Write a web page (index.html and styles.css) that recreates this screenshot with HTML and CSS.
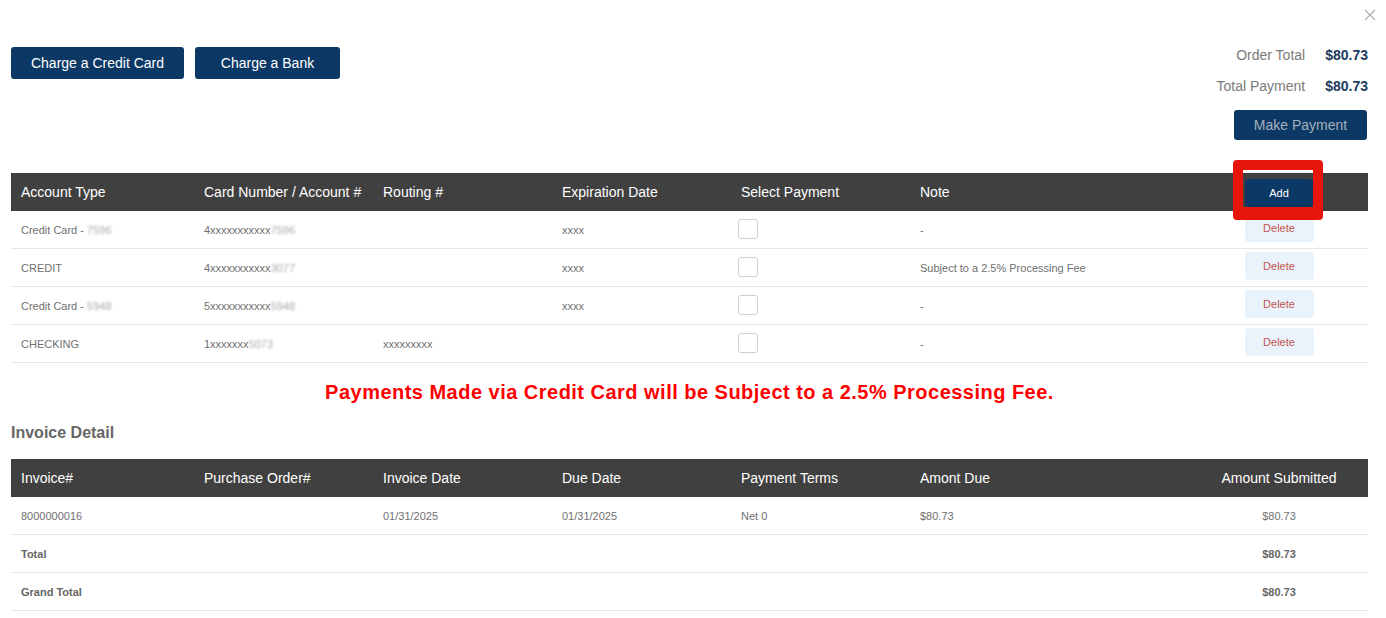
FILE: index.html
```html
<!DOCTYPE html>
<html>
<head>
<meta charset="utf-8">
<link rel="stylesheet" href="styles.css">
</head>
<body>
<div class="page">
  <button class="close" aria-label="Close">
    <svg width="12" height="12" viewBox="0 0 12 12"><path d="M1 1L11 11M11 1L1 11" stroke="#b0b0b0" stroke-width="1.2" fill="none"/></svg>
  </button>
  <div class="top">
    <div class="charge-buttons">
      <button class="btn btn-navy btn-cc">Charge a Credit Card</button>
      <button class="btn btn-navy btn-bank">Charge a Bank</button>
    </div>
    <div class="summary">
      <div class="totals">
        <span class="label">Order Total</span><span class="value">$80.73</span>
        <span class="label">Total Payment</span><span class="value">$80.73</span>
      </div>
      <button class="btn btn-navy btn-make">Make Payment</button>
    </div>
  </div>

  <table class="grid accounts">
    <colgroup>
      <col class="c1"><col class="c2"><col class="c3"><col class="c4"><col class="c5"><col class="c6"><col class="c7">
    </colgroup>
    <thead>
      <tr>
        <th>Account Type</th>
        <th>Card Number / Account #</th>
        <th>Routing #</th>
        <th>Expiration Date</th>
        <th>Select Payment</th>
        <th>Note</th>
        <th class="center"><div class="add-wrap"><button class="btn-add">Add</button><span class="highlight"></span></div></th>
      </tr>
    </thead>
    <tbody>
      <tr>
        <td>Credit Card - <span class="blur">7596</span></td>
        <td>4xxxxxxxxxxx<span class="blur">7596</span></td>
        <td></td>
        <td>xxxx</td>
        <td><span class="check"></span></td>
        <td>-</td>
        <td class="center"><button class="btn-del">Delete</button></td>
      </tr>
      <tr>
        <td>CREDIT</td>
        <td>4xxxxxxxxxxx<span class="blur">3077</span></td>
        <td></td>
        <td>xxxx</td>
        <td><span class="check"></span></td>
        <td>Subject to a 2.5% Processing Fee</td>
        <td class="center"><button class="btn-del">Delete</button></td>
      </tr>
      <tr>
        <td>Credit Card - <span class="blur">5948</span></td>
        <td>5xxxxxxxxxxx<span class="blur">5948</span></td>
        <td></td>
        <td>xxxx</td>
        <td><span class="check"></span></td>
        <td>-</td>
        <td class="center"><button class="btn-del">Delete</button></td>
      </tr>
      <tr>
        <td>CHECKING</td>
        <td>1xxxxxxx<span class="blur">5073</span></td>
        <td>xxxxxxxxx</td>
        <td></td>
        <td><span class="check"></span></td>
        <td>-</td>
        <td class="center"><button class="btn-del">Delete</button></td>
      </tr>
    </tbody>
  </table>

  <p class="notice">Payments Made via Credit Card will be Subject to a 2.5% Processing Fee.</p>

  <h3 class="section-title">Invoice Detail</h3>

  <table class="grid invoices">
    <colgroup>
      <col class="c1"><col class="c2"><col class="c3"><col class="c4"><col class="c5"><col class="c6"><col class="c7">
    </colgroup>
    <thead>
      <tr>
        <th>Invoice#</th>
        <th>Purchase Order#</th>
        <th>Invoice Date</th>
        <th>Due Date</th>
        <th>Payment Terms</th>
        <th>Amont Due</th>
        <th class="center">Amount Submitted</th>
      </tr>
    </thead>
    <tbody>
      <tr>
        <td>8000000016</td>
        <td></td>
        <td>01/31/2025</td>
        <td>01/31/2025</td>
        <td>Net 0</td>
        <td>$80.73</td>
        <td class="center">$80.73</td>
      </tr>
      <tr class="bold">
        <td>Total</td>
        <td></td><td></td><td></td><td></td><td></td>
        <td class="center">$80.73</td>
      </tr>
      <tr class="bold">
        <td>Grand Total</td>
        <td></td><td></td><td></td><td></td><td></td>
        <td class="center">$80.73</td>
      </tr>
    </tbody>
  </table>
</div>
</body>
</html>
```

FILE: styles.css
```css
* { box-sizing: border-box; }

body {
  margin: 0;
  background: #fff;
  font-family: "Liberation Sans", Arial, sans-serif;
  color: #666;
}

.page {
  position: relative;
  width: 1386px;
  padding: 0 18px 0 11px;
}

.close {
  position: absolute;
  top: 9px;
  right: 10px;
  width: 12px;
  height: 12px;
  padding: 0;
  border: 0;
  background: none;
  display: block;
}
.close svg { display: block; }

.top {
  display: flex;
  justify-content: space-between;
  align-items: flex-start;
}

.charge-buttons {
  display: flex;
  gap: 11px;
  margin-top: 47px;
}

.btn {
  font-family: "Liberation Sans", Arial, sans-serif;
  border: 0;
  border-radius: 3px;
  cursor: pointer;
}

.btn-navy {
  background: #0b3864;
  color: #fff;
  font-size: 14px;
  height: 32px;
}

.btn-cc { width: 173px; }
.btn-bank { width: 145px; }

.summary {
  display: flex;
  flex-direction: column;
  align-items: flex-end;
  padding-top: 45px;
}

.totals {
  display: grid;
  grid-template-columns: auto auto;
  column-gap: 20px;
  row-gap: 11px;
  font-size: 14px;
  line-height: 20px;
}

.totals .label {
  text-align: right;
  color: #7a7a7a;
}

.totals .value {
  font-weight: bold;
  color: #1c3b5f;
}

.btn-make {
  margin-top: 14px;
  width: 133px;
  height: 30px;
  font-size: 14px;
  color: #a4b0be;
  margin-right: 1px;
}

.grid {
  width: 1357px;
  border-collapse: separate;
  border-spacing: 0;
  table-layout: fixed;
}

.grid .c1 { width: 183px; }
.grid .c2, .grid .c3, .grid .c4, .grid .c5 { width: 179px; }
.grid .c6 { width: 280px; }
.grid .c7 { width: 178px; }

.grid th {
  background: #404040;
  color: #fff;
  font-weight: normal;
  font-size: 14px;
  text-align: left;
  height: 38px;
  padding: 0 10px;
  vertical-align: middle;
}

.grid td {
  height: 38px;
  padding: 0 10px;
  font-size: 11px;
  color: #707070;
  border-bottom: 1px solid #e6e6e6;
  vertical-align: middle;
  white-space: nowrap;
}

.grid .center { text-align: center; }

.accounts { margin-top: 33px; }

.blur {
  color: #aaa;
  filter: blur(1.3px);
}

.check {
  display: block;
  width: 20px;
  height: 20px;
  margin-left: -3px;
  margin-top: -2px;
  border: 1px solid #d0d0d0;
  border-radius: 3px;
  background: #fff;
}

.add-wrap {
  position: relative;
  width: 68px;
  height: 28px;
  margin: 2px auto 0;
}

.btn-add {
  display: block;
  width: 68px;
  height: 28px;
  border: 0;
  border-radius: 2px;
  background: #0b3864;
  color: #fff;
  font-family: "Liberation Sans", Arial, sans-serif;
  font-size: 11px;
}

.highlight {
  position: absolute;
  left: -12px;
  top: -19px;
  width: 90px;
  height: 60px;
  border: 10px solid #e8150d;
  border-bottom-width: 13px;
  border-radius: 4px;
  pointer-events: none;
  z-index: 2;
}

.btn-del {
  width: 69px;
  height: 28px;
  border: 0;
  border-radius: 3px;
  background: #eaf3fc;
  color: #c4544a;
  font-family: "Liberation Sans", Arial, sans-serif;
  font-size: 11px;
  vertical-align: middle;
  margin-top: -3px;
}

.notice {
  margin: 17px 0 0;
  text-align: center;
  color: #f00;
  font-weight: bold;
  font-size: 20px;
  letter-spacing: 0.48px;
  line-height: 24px;
}

.section-title {
  margin: 19px 0 0;
  font-size: 16px;
  line-height: 20px;
  font-weight: bold;
  color: #666;
}

.invoices { margin-top: 16px; }

.invoices tr.bold td { font-weight: bold; color: #666; }
```
